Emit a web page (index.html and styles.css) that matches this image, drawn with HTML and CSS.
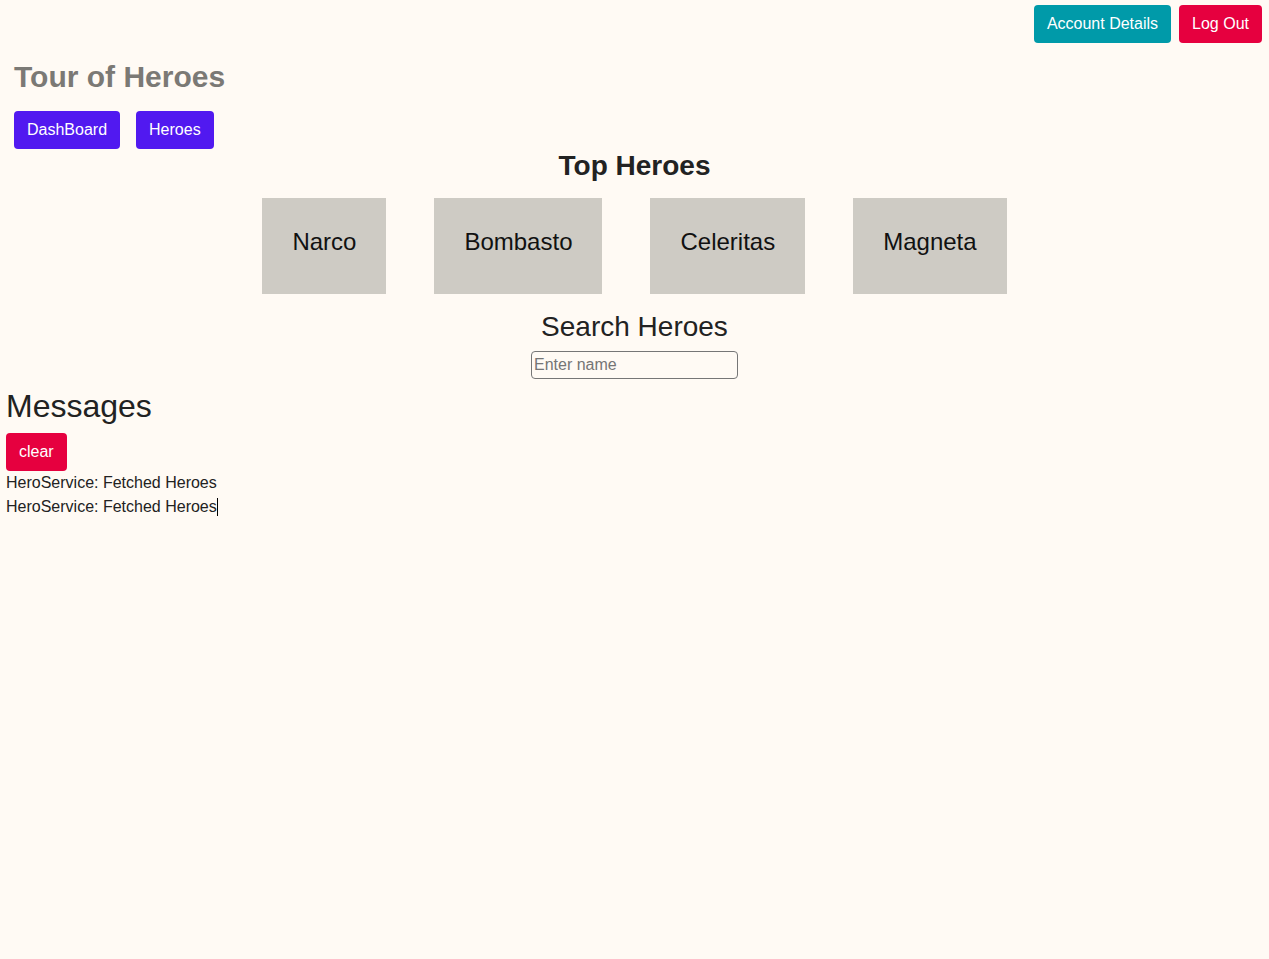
FILE: index.html
```html
<!DOCTYPE html>
<html lang="en">
<head>
<meta charset="utf-8">
<title>Tour of Heroes</title>
<link rel="stylesheet" href="styles.css">
</head>
<body>
  <div class="topbar">
    <button class="btn btn-teal">Account Details</button>
    <button class="btn btn-red">Log Out</button>
  </div>
  <div class="app">
    <h1 class="title">Tour of Heroes</h1>
    <nav class="nav">
      <button class="btn btn-purple">DashBoard</button>
      <button class="btn btn-purple">Heroes</button>
    </nav>
    <h2 class="top-title">Top Heroes</h2>
    <div class="cards">
      <div class="card">Narco</div>
      <div class="card">Bombasto</div>
      <div class="card">Celeritas</div>
      <div class="card">Magneta</div>
    </div>
    <div class="search">
      <h3 class="search-title">Search Heroes</h3>
      <input class="search-input" type="text" placeholder="Enter name">
    </div>
  </div>
  <div class="messages">
    <h2 class="messages-title">Messages</h2>
    <button class="btn btn-red">clear</button>
    <div class="msg">HeroService: Fetched Heroes</div>
    <div class="msg">HeroService: Fetched Heroes<span class="caret"></span></div>
  </div>
</body>
</html>
```

FILE: styles.css
```css
html, body {
  margin: 0;
  padding: 0;
  background: #fffaf4;
  font-family: "Liberation Sans", Arial, sans-serif;
  color: #222222;
}

.btn {
  font-family: "Liberation Sans", Arial, sans-serif;
  font-size: 16px;
  line-height: 18px;
  height: 38px;
  padding: 0 13px;
  border: none;
  border-radius: 4px;
  color: #ffffff;
  cursor: pointer;
}

.btn-teal { background: #009aa9; }
.btn-red { background: #e6003f; }
.btn-purple { background: #5119f0; }

.topbar {
  display: flex;
  justify-content: flex-end;
  gap: 8px;
  padding: 5px 7px 0 0;
}

.app {
  padding: 0 14px;
}

.title {
  margin: 17px 0 0 0;
  font-size: 30px;
  line-height: 34px;
  font-weight: bold;
  color: #7b7975;
}

.nav {
  display: flex;
  gap: 16px;
  margin-top: 17px;
}

.top-title {
  margin: 1px 0 0 0;
  text-align: center;
  font-size: 28px;
  line-height: 32px;
  font-weight: bold;
  color: #222222;
}

.cards {
  display: flex;
  justify-content: center;
  gap: 48px;
  margin-top: 16px;
}

.card {
  background: #cecbc4;
  color: #111111;
  font-size: 24px;
  line-height: 28px;
  padding: 30px 30px 38px 30px;
}

.search {
  display: flex;
  flex-direction: column;
  align-items: center;
  margin-top: 17px;
}

.search-title {
  margin: 0;
  font-size: 28px;
  line-height: 32px;
  font-weight: normal;
  color: #222222;
}

.search-input {
  box-sizing: border-box;
  width: 207px;
  height: 28px;
  margin-top: 8px;
  padding: 0 2px;
  font-family: "Liberation Sans", Arial, sans-serif;
  font-size: 16px;
  border: 1px solid #767676;
  border-radius: 4px;
  background: #fffaf4;
  color: #222222;
}

.search-input::placeholder {
  color: #757575;
}

.messages {
  padding: 0 6px;
  margin-top: 9px;
}

.messages-title {
  margin: 0 0 9px 0;
  font-size: 32px;
  line-height: 36px;
  font-weight: normal;
  color: #222222;
}

.msg {
  font-size: 16px;
  line-height: 24px;
}

.caret {
  display: inline-block;
  width: 1px;
  height: 18px;
  background: #000000;
  vertical-align: -4px;
}
```
